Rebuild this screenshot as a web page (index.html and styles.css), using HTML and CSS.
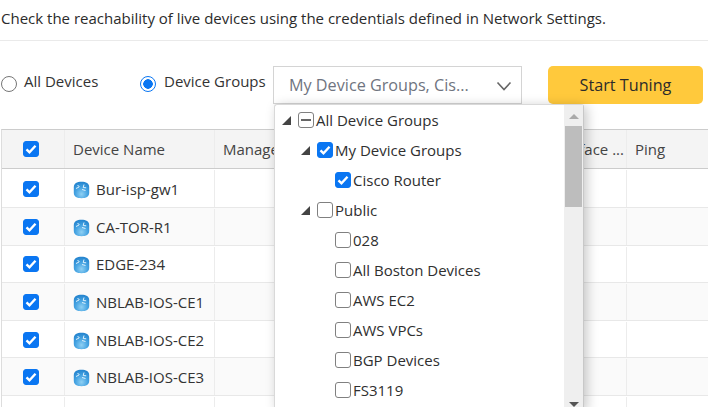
FILE: index.html
```html
<!DOCTYPE html>
<html lang="en">
<head>
<meta charset="utf-8">
<title>Start Tuning</title>
<link rel="stylesheet" href="styles.css">
</head>
<body>
<svg class="defs" width="0" height="0" aria-hidden="true">
  <defs>
    <radialGradient id="rg" cx=".5" cy=".75" r=".8">
      <stop offset="0" stop-color="#8fd0f3"/><stop offset=".5" stop-color="#45a3e2"/><stop offset="1" stop-color="#1f7fcb"/>
    </radialGradient>
    <symbol id="router" viewBox="0 0 17 18">
      <path d="M.8 6C.8 2.500 4 .8 8.500.8s7.700 1.700 7.700 5.200v6c0 3.500-3.200 5.200-7.700 5.200S.8 15.500.8 12z" fill="url(#rg)"/>
      <path d="M3 7.500l3-1.500M4.500 4l2 2M11 3.500l-.8 3 3 .3M9 8.500l3.500 1" fill="none" stroke="#dff1fc" stroke-width="1"/>
    </symbol>
    <symbol id="tick" viewBox="0 0 16 16">
      <path d="M3.500 8.300l3 3 6-6.500" fill="none" stroke="#fff" stroke-width="2.400"/>
    </symbol>
  </defs>
</svg>
<main class="page">
  <p class="intro">Check the reachability of live devices using the credentials defined in Network Settings.</p>
  <div class="toolbar">
    <label class="radio-opt first"><span class="radio"></span>All Devices</label>
    <label class="radio-opt second"><span class="radio on"></span>Device Groups</label>
    <div class="picker">
      <div class="select">
        <span>My Device Groups, Cis...</span>
        <svg class="chev" width="16" height="10" viewBox="0 0 16 10"><path d="M1.500 1.500L8 8.500l6.500-7" fill="none" stroke="#666" stroke-width="1.600"/></svg>
      </div>
      <div class="dropdown">
        <div class="tree">
          <div class="node l0"><span class="arrow"></span><span class="cb minus"></span><span>All Device Groups</span></div>
          <div class="node l1"><span class="arrow"></span><span class="cb on"><svg><use href="#tick"/></svg></span><span>My Device Groups</span></div>
          <div class="node l2"><span class="cb on"><svg><use href="#tick"/></svg></span><span>Cisco Router</span></div>
          <div class="node l1"><span class="arrow"></span><span class="cb"></span><span>Public</span></div>
          <div class="node l2"><span class="cb"></span><span>028</span></div>
          <div class="node l2"><span class="cb"></span><span>All Boston Devices</span></div>
          <div class="node l2"><span class="cb"></span><span>AWS EC2</span></div>
          <div class="node l2"><span class="cb"></span><span>AWS VPCs</span></div>
          <div class="node l2"><span class="cb"></span><span>BGP Devices</span></div>
          <div class="node l2"><span class="cb"></span><span>FS3119</span></div>
        </div>
        <div class="scrollbar">
          <span class="sb-up"></span>
          <span class="sb-thumb"></span>
          <span class="sb-down"></span>
        </div>
      </div>
    </div>
    <button class="start" type="button">Start Tuning</button>
  </div>
  <div class="grid">
    <div class="row head">
      <div class="c-check"><span class="cb on"><svg><use href="#tick"/></svg></span></div>
      <div class="c-name">Device Name</div>
      <div class="c-mgmt">Manage</div>
      <div class="c-iface">Interface ...</div>
      <div class="c-ping">Ping</div>
    </div>
    <div class="row first-row">
      <div class="c-check"><span class="cb on"><svg><use href="#tick"/></svg></span></div>
      <div class="c-name"><svg class="dev"><use href="#router"/></svg>Bur-isp-gw1</div>
      <div class="c-mgmt"></div><div class="c-iface"></div><div class="c-ping"></div>
    </div>
    <div class="row alt">
      <div class="c-check"><span class="cb on"><svg><use href="#tick"/></svg></span></div>
      <div class="c-name"><svg class="dev"><use href="#router"/></svg>CA-TOR-R1</div>
      <div class="c-mgmt"></div><div class="c-iface"></div><div class="c-ping"></div>
    </div>
    <div class="row">
      <div class="c-check"><span class="cb on"><svg><use href="#tick"/></svg></span></div>
      <div class="c-name"><svg class="dev"><use href="#router"/></svg>EDGE-234</div>
      <div class="c-mgmt"></div><div class="c-iface"></div><div class="c-ping"></div>
    </div>
    <div class="row alt">
      <div class="c-check"><span class="cb on"><svg><use href="#tick"/></svg></span></div>
      <div class="c-name"><svg class="dev"><use href="#router"/></svg>NBLAB-IOS-CE1</div>
      <div class="c-mgmt"></div><div class="c-iface"></div><div class="c-ping"></div>
    </div>
    <div class="row">
      <div class="c-check"><span class="cb on"><svg><use href="#tick"/></svg></span></div>
      <div class="c-name"><svg class="dev"><use href="#router"/></svg>NBLAB-IOS-CE2</div>
      <div class="c-mgmt"></div><div class="c-iface"></div><div class="c-ping"></div>
    </div>
    <div class="row alt">
      <div class="c-check"><span class="cb on"><svg><use href="#tick"/></svg></span></div>
      <div class="c-name"><svg class="dev"><use href="#router"/></svg>NBLAB-IOS-CE3</div>
      <div class="c-mgmt"></div><div class="c-iface"></div><div class="c-ping"></div>
    </div>
    <div class="row">
      <div class="c-check"><span class="cb on"><svg><use href="#tick"/></svg></span></div>
      <div class="c-name"></div>
      <div class="c-mgmt"></div><div class="c-iface"></div><div class="c-ping"></div>
    </div>
  </div>
</main>
</body>
</html>
```
FILE: styles.css
```css
html, body {
  margin: 0;
  height: 407px;
  overflow: hidden;
  background: #fff;
}
body {
  font-family: "Open Sans", sans-serif;
  font-size: 15px;
  color: #333;
}
.defs { display: block; height: 0; }
.page { width: 708px; }
.intro {
  margin: 0;
  padding: 8px 0 0 1px;
  box-sizing: border-box;
  line-height: 20px;
  color: #2b2b2b;
  border-bottom: 1px solid #eaeaea;
  height: 41px;
}
.toolbar {
  display: flex;
  align-items: flex-start;
  padding: 25px 0 0 0;
  height: 88px;
  box-sizing: border-box;
}
.radio-opt {
  display: flex;
  align-items: flex-start;
  line-height: 20px;
  padding-top: 5px;
  color: #333;
}
.radio-opt.first { padding-left: 1px; width: 140px; box-sizing: border-box; }
.radio-opt.second { width: 133px; }
.radio {
  width: 16px;
  height: 16px;
  box-sizing: border-box;
  border: 1px solid #767676;
  border-radius: 50%;
  margin: 5px 7px 0 0;
  background: #fff;
  flex: none;
}
.radio.on {
  margin-right: 8px;
  border: 1.5px solid #0a76f2;
  background: radial-gradient(circle, #0a76f2 0 4.500px, #fff 5px);
}
.picker { position: relative; width: 249px; margin-right: 26px; }
.select {
  height: 38px;
  box-sizing: border-box;
  border: 1px solid #d4d4d4;
  display: flex;
  align-items: center;
  justify-content: space-between;
  padding: 0 9px 0 15px;
  font-size: 16.200px;
  color: #6f7480;
  background: #fff;
}
.chev { flex: none; margin-top: 1px; }
.start {
  width: 155px;
  height: 38px;
  border: 0;
  border-radius: 5px;
  background: #ffc93c;
  font: 16.200px "Open Sans", sans-serif;
  color: #2b2b2b;
  padding: 0;
}
.dropdown {
  position: absolute;
  left: 1px;
  top: 38px;
  width: 310px;
  height: 306px;
  box-sizing: border-box;
  background: #fff;
  border: 1px solid #d9d9d9;
  border-right-color: #c8c8c8;
  border-radius: 3px 3px 0 0;
  box-shadow: 3px 2px 12px rgba(0, 0, 0, .22);
  display: flex;
  z-index: 5;
}
.tree { flex: 1; }
.node {
  height: 30px;
  display: flex;
  align-items: center;
  color: #2f2f2f;
  white-space: nowrap;
}
.node .cb { margin-right: 2px; }
.node.l0 { padding-left: 7px; }
.node.l1 { padding-left: 26px; }
.node.l2 { padding-left: 60px; }
.arrow {
  width: 0;
  height: 0;
  border-style: solid;
  border-width: 0 0 9px 9px;
  border-color: transparent transparent #444 transparent;
  margin-right: 7px;
  flex: none;
}
.cb {
  width: 16px;
  height: 16px;
  box-sizing: border-box;
  border: 1px solid #808080;
  border-radius: 3px;
  background: #fff;
  display: inline-block;
  flex: none;
  position: relative;
}
.cb.on { background: #0a76f2; border-color: #0a76f2; }
.cb.on svg { display: block; width: 16px; height: 16px; margin: -1px; }
.cb.minus::after {
  content: "";
  position: absolute;
  left: 2px;
  right: 2px;
  top: 6px;
  height: 2px;
  background: #666;
}
.scrollbar {
  width: 19px;
  flex: none;
  background: #efefef;
  display: flex;
  flex-direction: column;
  align-items: center;
}
.sb-up, .sb-down {
  width: 0;
  height: 0;
  border-style: solid;
  border-color: transparent;
  flex: none;
}
.sb-up {
  border-width: 0 5px 5px;
  border-bottom-color: #aaa;
  margin: 9px 0 7px;
}
.sb-down {
  border-width: 5px 5px 0;
  border-top-color: #555;
  margin: auto 0 2px;
}
.sb-thumb { width: 17px; height: 81px; background: #bdbdbd; flex: none; }
.grid {
  margin-left: 1px;
  border-top: 1px solid #ccc;
  border-left: 1px solid #ddd;
}
.row {
  display: grid;
  grid-template-columns: 63px 150px 1fr 89px 81px;
  height: 37.600px;
  box-sizing: border-box;
  padding-top: 1px;
  border-bottom: 1px solid #e8e8e8;
  align-items: stretch;
}
.row.first-row { height: 39px; }
.row.alt { background: #fafafa; }
.row.head {
  height: 39px;
  padding-top: 0;
  background: #f4f4f4;
  border-bottom: 1px solid #ccc;
}
.row > div {
  display: flex;
  align-items: center;
  border-right: 1px solid #ececec;
  white-space: nowrap;
  overflow: hidden;
}
.row > div:last-child { border-right: 0; }
.c-check { padding-left: 21px; }
.c-name, .c-mgmt, .c-iface, .c-ping { padding-left: 8px; }
.head > div { color: #444; }
.dev { width: 17px; height: 18px; margin: 2px 6px 0 0; flex: none; }
```
